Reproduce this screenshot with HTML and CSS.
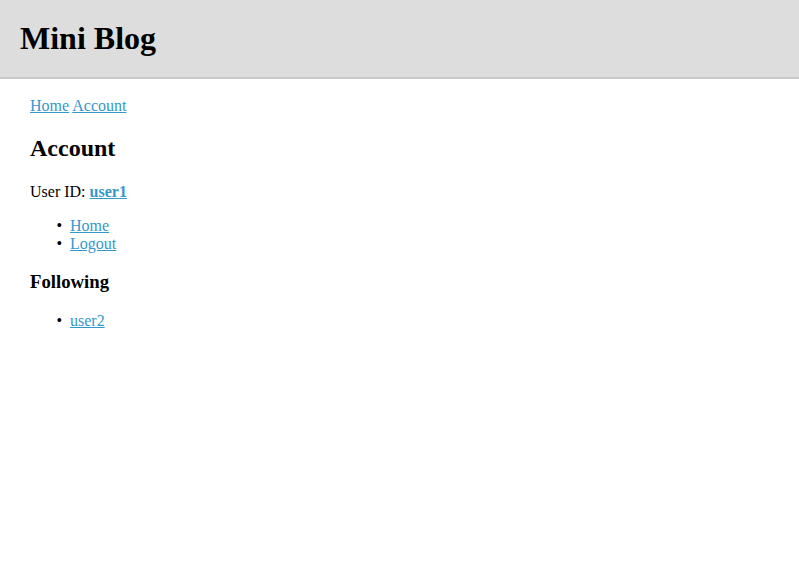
FILE: index.html
```html
<!DOCTYPE html>
<html lang="en">
<head>
<meta charset="utf-8">
<title>Mini Blog</title>
<link rel="stylesheet" href="styles.css">
</head>
<body>
<header class="site-header">
  <h1 class="site-title">Mini Blog</h1>
</header>
<main class="content">
  <nav class="breadcrumb"><a href="#">Home</a> <a href="#">Account</a></nav>
  <h2 class="page-title">Account</h2>
  <p class="user-id">User ID: <a href="#" class="user-link">user1</a></p>
  <ul class="link-list">
    <li><a href="#">Home</a></li>
    <li><a href="#">Logout</a></li>
  </ul>
  <h3 class="section-title">Following</h3>
  <ul class="link-list">
    <li><a href="#">user2</a></li>
  </ul>
</main>
</body>
</html>
```
FILE: styles.css
```css
html, body {
  margin: 0;
  padding: 0;
  background: #ffffff;
  color: #000000;
  font-family: "Liberation Serif", "Times New Roman", serif;
  font-size: 16px;
}

.site-header {
  background: #dddddd;
  padding: 20px 20px 20px;
  border-bottom: 2px solid #c8c8c8;
}

.site-title {
  margin: 0;
  font-size: 32px;
  font-weight: bold;
}

.content {
  padding: 0 30px;
}

.breadcrumb {
  margin-top: 18px;
}

a {
  color: #3598ca;
  text-decoration: underline;
}

.page-title {
  font-size: 24px;
  margin: 20px 0 21px;
}

.user-id {
  margin: 16px 0;
}

.user-link {
  font-weight: bold;
}

.link-list {
  margin: 16px 0;
  padding-left: 40px;
  list-style-type: "\2022\00a0\00a0";
}

.section-title {
  font-size: 18.72px;
  margin: 17.72px 0 19.72px;
}
```
